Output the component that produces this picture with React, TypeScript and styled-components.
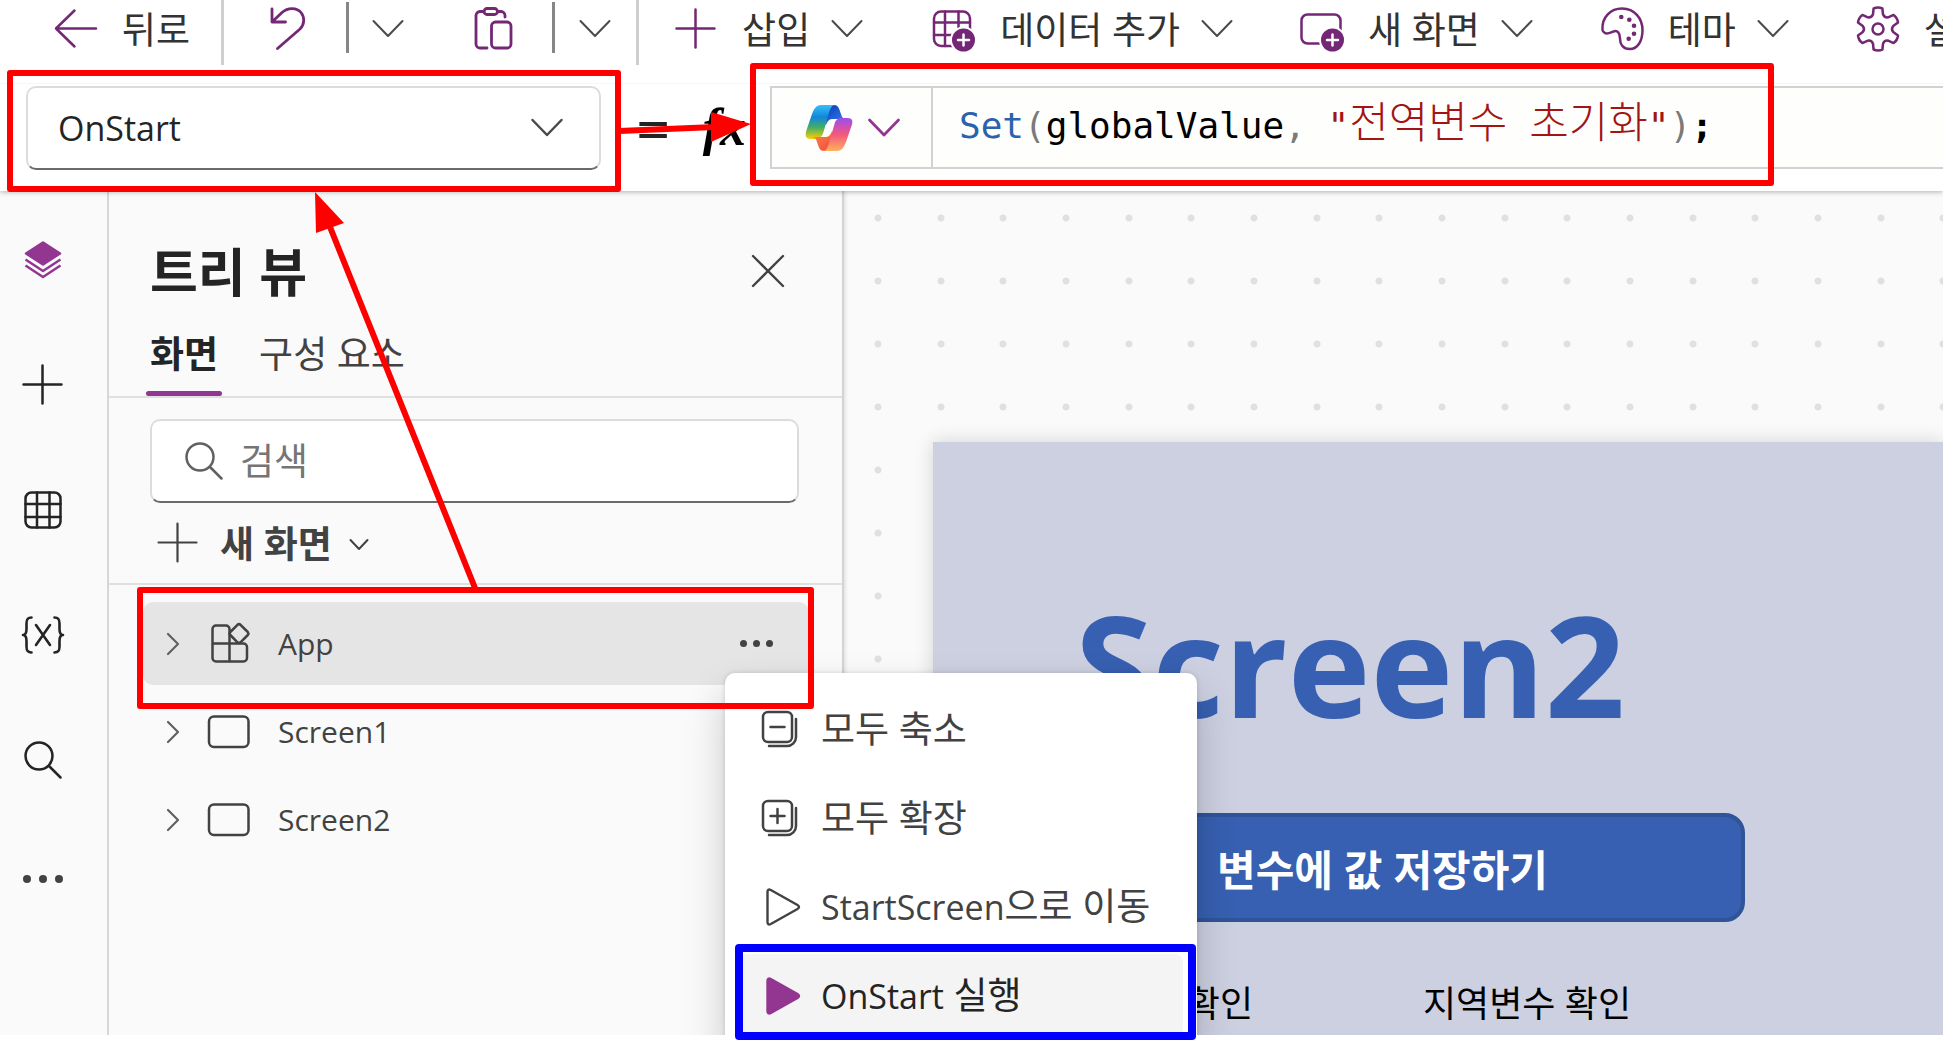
import React from "react";
import styled, { createGlobalStyle, css } from "styled-components";

const PURPLE = "#742774";
const ACCENT = "#923692";
const INK = "#242424";
const INK_SOFT = "#424242";
const LINE = "#dcdcdc";

const GlobalStyle = createGlobalStyle`
  *, *::before, *::after { box-sizing: border-box; }
  body {
    margin: 0;
    background: #fff;
    color: ${INK};
    font-family: "Open Sans", "Noto Sans CJK KR", sans-serif;
    overflow: hidden;
  }
  button, input, select {
    font: inherit;
    color: inherit;
    background: none;
    border: 0;
    padding: 0;
    margin: 0;
    outline: none;
  }
  svg { display: block; flex: none; }
`;

const Page = styled.div`
  position: relative;
  display: flex;
  flex-direction: column;
  height: 100vh;
  padding-bottom: 14px;
  overflow: hidden;
`;

/* ---------- header ---------- */

const Header = styled.header`
  position: relative;
  z-index: 2;
  flex: none;
  background: #fff;
  box-shadow: 0 1px 5px rgba(0, 0, 0, 0.3);
`;

const Toolbar = styled.div`
  display: flex;
  align-items: flex-start;
  height: 83px;
  overflow: hidden;
`;

const ToolButton = styled.button<{ $ml?: number }>`
  display: flex;
  flex: none;
  align-items: center;
  gap: 24px;
  height: 58px;
  margin-left: ${(p) => p.$ml ?? 0}px;
  font-size: 37px;
  line-height: 58px;
  white-space: nowrap;
  color: #333;
  > span { padding-top: 2px; }
  > span + svg { margin-left: -3px; }
`;

const ToolDivider = styled.span<{ $ml: number; $short?: boolean }>`
  flex: none;
  width: 3px;
  height: ${(p) => (p.$short ? 51 : 65)}px;
  margin-top: ${(p) => (p.$short ? 2 : 0)}px;
  margin-left: ${(p) => p.$ml}px;
  background: ${(p) => (p.$short ? "#868686" : "#cfcfcf")};
`;

const PropertyBar = styled.div`
  display: flex;
  align-items: flex-start;
  height: 108px;
  padding: 2px 0 0 26px;
  border-top: 1px solid #f7f7f7;
`;

const SelectBox = styled.div`
  display: grid;
  flex: none;
  width: 575px;
  align-items: center;
  > * { grid-area: 1 / 1; }
  > svg { justify-self: end; margin-right: 38px; pointer-events: none; }
`;

const PropertySelect = styled.select`
  appearance: none;
  width: 100%;
  height: 84px;
  padding-left: 30px;
  border: 2px solid ${LINE};
  border-bottom-color: #6a6a6a;
  border-radius: 10px;
  font-size: 34px;
`;

const FormulaSigns = styled.div`
  display: flex;
  flex: none;
  align-items: center;
  justify-content: space-between;
  width: 169px;
  height: 84px;
  padding: 0 24px 0 35px;
  font-size: 60px;
  line-height: 84px;
  > em { font-family: "Liberation Serif", serif; font-size: 52px; font-weight: 700; color: #000; }
`;

const FormulaBox = styled.div`
  display: flex;
  flex: 1;
  height: 83px;
  border: 2px solid #d2d2d2;
  border-right: 0;
  background: #fefefc;
`;

const CopilotButton = styled.button`
  display: flex;
  align-items: center;
  flex: none;
  gap: 15px;
  width: 161px;
  padding-left: 33px;
  border-right: 2px solid #d2d2d2;
`;

const Formula = styled.div`
  flex: 1;
  padding-left: 26px;
  font-family: "DejaVu Sans Mono", "Noto Sans CJK KR", monospace;
  font-size: 36px;
  line-height: 70px;
  white-space: pre;
  color: #000;
  outline: none;
`;

const Token = styled.span<{ $kind: "fn" | "punct" | "str" | "hangul" }>`
  ${(p) => p.$kind === "fn" && css`color: #2b62ad;`}
  ${(p) => p.$kind === "punct" && css`color: #7a7a7a;`}
  ${(p) => p.$kind === "str" && css`color: #a31515;`}
  ${(p) => p.$kind === "hangul" && css`color: #a31515; font-size: 43px; font-weight: 300;`}
`;

/* ---------- body ---------- */

const Workspace = styled.main`
  position: relative;
  display: flex;
  flex: 1;
  min-height: 0;
  overflow: hidden;
  background: #fafafa;
`;

const Rail = styled.nav`
  display: flex;
  flex-direction: column;
  flex: none;
  width: 109px;
  padding-top: 6px;
  padding-right: 21px;
  border-right: 2px solid ${LINE};
`;

const RailButton = styled.button`
  display: flex;
  flex: none;
  align-items: center;
  justify-content: center;
  height: 125px;
  color: ${INK};
  &:last-child { height: 113px; }
`;

const TreePanel = styled.aside`
  flex: none;
  position: relative;
  z-index: 1;
  width: 735px;
  border-right: 2px solid #d4d4d4;
  background: #fafafa;
  box-shadow: 1px 0 4px rgba(0, 0, 0, 0.12);
`;

const PanelHeader = styled.div`
  display: flex;
  align-items: center;
  justify-content: space-between;
  height: 116px;
  padding: 46px 57px 0 41px;
`;

const PanelTitle = styled.h2`
  margin: 0;
  font-size: 52px;
  line-height: 70px;
  font-weight: 700;
`;

const Tabs = styled.div`
  display: flex;
  gap: 33px;
  height: 91px;
  padding-left: 37px;
  border-bottom: 2px solid #e0e0e0;
`;

const Tab = styled.button<{ $active?: boolean }>`
  position: relative;
  height: 89px;
  padding: 4px 4px 0;
  font-size: 37px;
  line-height: 85px;
  font-weight: ${(p) => (p.$active ? 700 : 400)};
  color: ${(p) => (p.$active ? INK : INK_SOFT)};
  ${(p) =>
    p.$active &&
    css`
      &::after {
        content: "";
        position: absolute;
        left: 0;
        right: 0;
        bottom: 0;
        height: 5px;
        border-radius: 3px;
        background: ${ACCENT};
      }
    `}
`;

const SearchBox = styled.label`
  display: flex;
  align-items: center;
  gap: 17px;
  height: 84px;
  margin: 21px 43px 0 41px;
  padding-left: 33px;
  border: 2px solid ${LINE};
  border-bottom-color: #6a6a6a;
  border-radius: 10px;
  background: #fff;
  color: #616161;
`;

const SearchInput = styled.input`
  flex: 1;
  min-width: 0;
  font-size: 37px;
  line-height: 60px;
  &::placeholder { color: #757575; opacity: 1; }
`;

const NewScreenRow = styled.div`
  display: flex;
  height: 82px;
  padding-left: 47px;
  border-bottom: 2px solid #e0e0e0;
`;

const NewScreenButton = styled.button`
  display: flex;
  align-items: center;
  height: 80px;
  gap: 20px;
  font-size: 37px;
  line-height: 78px;
  font-weight: 700;
  color: ${INK_SOFT};
  > span { padding-top: 2px; }
  > span + svg { margin-left: -3px; }
`;

const TreeList = styled.ul`
  display: flex;
  flex-direction: column;
  gap: 5px;
  margin: 0;
  padding: 17px 33px 0 34px;
  list-style: none;
`;

const TreeRow = styled.li<{ $selected?: boolean }>`
  display: flex;
  align-items: center;
  height: 83px;
  padding: 0 36px 0 23px;
  border-radius: 10px;
  background: ${(p) => (p.$selected ? "#e5e5e5" : "transparent")};
  color: ${INK_SOFT};
`;

const TreeItem = styled.button`
  display: flex;
  flex: 1;
  align-items: center;
  gap: 28px;
  font-size: 30px;
  line-height: 60px;
  text-align: left;
`;

const IconButton = styled.button`
  flex: none;
  color: ${INK_SOFT};
`;

/* ---------- canvas ---------- */

const Canvas = styled.section`
  display: flex;
  flex: 1;
  min-width: 0;
  padding: 251px 0 0 89px;
  background-color: #fafafa;
  background-image:
    radial-gradient(circle at 34px 27px, #e0e0e0 3px, transparent 4px),
    radial-gradient(circle at 97px 27px, #e0e0e0 3px, transparent 4px),
    radial-gradient(circle at 159px 27px, #e0e0e0 3px, transparent 4px);
  background-size: 188px 63px;
`;

const Stage = styled.div`
  flex: 1;
  padding: 152px 0 0 87px;
  background: #cdd0e1;
  box-shadow: 0 0 18px rgba(0, 0, 0, 0.16);
`;

const StageTitle = styled.h1`
  margin: 0 0 79px 55px;
  font-size: 140px;
  line-height: 140px;
  font-weight: 700;
  color: #3760b2;
`;

const StageButton = styled.button`
  display: block;
  width: 725px;
  height: 109px;
  padding-top: 4px;
  border: 4px solid #2f5498;
  border-radius: 20px;
  background: #3760b2;
  color: #fff;
  font-size: 42px;
  line-height: 97px;
  font-weight: 700;
`;

const StageLabels = styled.div`
  display: grid;
  grid-template-columns: 378px 378px;
  margin-top: 58px;
  padding-left: 25px;
  font-size: 36px;
  line-height: 48px;
  color: #000;
`;

/* ---------- context menu ---------- */

const Menu = styled.div`
  position: absolute;
  z-index: 3;
  left: 725px;
  top: 482px;
  display: flex;
  flex-direction: column;
  gap: 6px;
  width: 472px;
  padding: 14px;
  border-radius: 10px;
  background: #fff;
  box-shadow: 0 0 5px rgba(0, 0, 0, 0.14), 0 20px 40px rgba(0, 0, 0, 0.2);
`;

const MenuItem = styled.button<{ $hover?: boolean }>`
  display: flex;
  align-items: center;
  gap: 20px;
  height: 83px;
  padding-left: 22px;
  border-radius: 8px;
  background: ${(p) => (p.$hover ? "#f4f4f4" : "transparent")};
  color: ${(p) => (p.$hover ? INK : INK_SOFT)};
  font-size: 37px;
  line-height: 82px;
  white-space: nowrap;
`;

const Latin = styled.span`
  font-size: 34px;
`;

const Annotations = styled.svg`
  position: absolute;
  z-index: 4;
  left: 0;
  top: 0;
  pointer-events: none;
`;

/* ---------- icons ---------- */

type IconProps = { children: React.ReactNode; w?: number; h?: number; color?: string; sw?: number };

const Icon = ({ children, w = 44, h = 44, color = "currentColor", sw = 2.5 }: IconProps) => (
  <svg
    width={w}
    height={h}
    viewBox={`0 0 ${w} ${h}`}
    fill="none"
    stroke={color}
    strokeWidth={sw}
    strokeLinecap="round"
    strokeLinejoin="round"
    overflow="visible"
    aria-hidden="true"
  >
    {children}
  </svg>
);

const ChevronDown = ({ color = "#4a4a4a", sw = 2 }: { color?: string; sw?: number }) => (
  <Icon w={32} h={20} color={color} sw={sw}>
    <path d="M1.5 2 L16 17 L30.5 2" />
  </Icon>
);

const ChevronRight = () => (
  <Icon w={14} h={24} color="#616161" sw={2.2}>
    <path d="M2 2 L12 12 L2 22" />
  </Icon>
);

const BackIcon = () => (
  <Icon color={PURPLE}>
    <path d="M42 21.5 H2 M20.5 3.5 L2 21.5 L20.5 39.5" />
  </Icon>
);

const UndoIcon = () => (
  <Icon color={PURPLE} sw={2.8}>
    <path d="M6 2 V15 H19.500 M6.500 14.500 L16 5.500 C22 0 31 0.500 35 5.500 C39 10.500 38.500 17.500 34 22 L11.500 41.500" />
  </Icon>
);

const PasteIcon = () => (
  <Icon color={PURPLE} sw={2.8}>
    <path d="M13 4.500 H9 A4 4 0 0 0 5 8.500 V37 A4 4 0 0 0 9 41 H16 M26.500 4.500 H30 A4 4 0 0 1 34 8.500 V10" />
    <rect x="13" y="1.500" width="13.500" height="6" rx="3" />
    <rect x="20.500" y="15" width="19.500" height="26" rx="4" />
  </Icon>
);

const PlusIcon = ({ color = "currentColor", sw = 2.5 }: { color?: string; sw?: number }) => (
  <Icon color={color} sw={sw}>
    <path d="M21.500 2.500 V40.500 M2.500 21.500 H40.500" />
  </Icon>
);

const PlusBadge = ({ cx }: { cx: number }) => (
  <>
    <circle cx={cx} cy="33" r="13.500" fill="#fff" stroke="none" />
    <circle cx={cx} cy="33" r="11.500" fill={PURPLE} stroke="none" />
    <path d={`M${cx - 5.5} 33 h11 M${cx} 27.500 v11`} stroke="#fff" />
  </>
);

const DataIcon = () => (
  <Icon w={46} color={PURPLE}>
    <rect x="4" y="4.500" width="36" height="34.500" rx="7" />
    <path d="M15 4.500 V39 M28.500 4.500 V39 M4 15.500 H40 M4 28 H40" />
    <PlusBadge cx={33.5} />
  </Icon>
);

const NewScreenIcon = () => (
  <Icon color={PURPLE}>
    <rect x="1.500" y="7.500" width="39" height="29" rx="6" />
    <PlusBadge cx={32.5} />
  </Icon>
);

const ThemeIcon = () => (
  <Icon color={PURPLE}>
    <path d="M2.500 23 C1.500 10 11 1.500 22 1.500 C35 1.500 42.500 12 42.500 23 C42.500 35 37 42 30 42 C22.500 42 20 36.500 20 31.500 C20 26 17.500 23 13.500 24.500 C9.500 26 7.500 27.500 5 26 C3.300 25.200 2.600 24.500 2.500 23 Z" />
    <g fill={PURPLE} stroke="none">
      <circle cx="21.300" cy="10" r="2.300" />
      <circle cx="29.300" cy="12.700" r="2.300" />
      <circle cx="34" cy="18.700" r="2.300" />
      <circle cx="34" cy="26.700" r="2.300" />
      <circle cx="28.700" cy="31.700" r="2.300" />
    </g>
  </Icon>
);

const gearPath = (() => {
  const at = (deg: number, r: number) => {
    const a = (deg * Math.PI) / 180;
    return `${(22 + r * Math.cos(a)).toFixed(1)} ${(22 + r * Math.sin(a)).toFixed(1)}`;
  };
  const parts: string[] = [];
  for (let k = 0; k < 6; k++) {
    const c = -90 + k * 60;
    parts.push(`${k ? "L" : "M"}${at(c - 19, 15.5)} L${at(c - 12, 21)} Q${at(c, 22.5)} ${at(c + 12, 21)} L${at(c + 19, 15.5)} Q${at(c + 30, 12.8)} ${at(c + 41, 15.5)}`);
  }
  return parts.join(" ") + " Z";
})();

const GearIcon = () => (
  <Icon color={PURPLE}>
    <path d={gearPath} />
    <circle cx="22" cy="22" r="5.500" />
  </Icon>
);

const CopilotIcon = () => (
  <svg width="48" height="46" viewBox="0 0 48 46" aria-hidden="true">
    <defs>
      <linearGradient id="cpA" x1="0" y1="0" x2="0" y2="1">
        <stop offset="0" stopColor="#35c1f7" />
        <stop offset="0.35" stopColor="#1186dd" />
        <stop offset="0.65" stopColor="#41ad67" />
        <stop offset="1" stopColor="#ffce05" />
      </linearGradient>
      <linearGradient id="cpB" x1="0" y1="0" x2="1" y2="1">
        <stop offset="0" stopColor="#0c2fb0" />
        <stop offset="1" stopColor="#2f8cf5" />
      </linearGradient>
      <linearGradient id="cpC" x1="0" y1="0" x2="0" y2="1">
        <stop offset="0" stopColor="#ffb15c" />
        <stop offset="0.5" stopColor="#f2587c" />
        <stop offset="1" stopColor="#a04bf0" />
      </linearGradient>
      <linearGradient id="cpD" x1="0" y1="0" x2="1" y2="1">
        <stop offset="0" stopColor="#f0443c" />
        <stop offset="1" stopColor="#fd8a4a" />
      </linearGradient>
    </defs>
    <path d="M22 0 H29 C33 0 34 3 36 9 C37 12.500 38 13.500 41 14 H27 C24 14 22 17 21 20 L17 14 Z" fill="url(#cpB)" />
    <path d="M30 0 H16 C11 0 9 4 7 9 L1.500 25 C-0.500 31 1 34 6 34 H10 C15 34 17 32 18.500 27 L24 8 C25.500 3 27 0 30 0 Z" fill="url(#cpA)" />
    <g transform="rotate(180 24 23)">
      <path d="M22 0 H29 C33 0 34 3 36 9 C37 12.500 38 13.500 41 14 H27 C24 14 22 17 21 20 L17 14 Z" fill="url(#cpD)" />
      <path d="M30 0 H16 C11 0 9 4 7 9 L1.500 25 C-0.500 31 1 33 6 33 H10 C15 33 17 32 18.500 27 L24 8 C25.500 3 27 0 30 0 Z" fill="url(#cpC)" />
    </g>
  </svg>
);

const LayersIcon = () => (
  <Icon w={38} h={38} color={ACCENT}>
    <path d="M19 1.500 L36 12.500 L19 23.500 L2 12.500 Z" fill={ACCENT} />
    <path d="M1.500 18.500 L19 30 L36.500 18.500 M1.500 24.500 L19 36 L36.500 24.500" strokeLinecap="butt" />
  </Icon>
);

const GridIcon = () => (
  <Icon w={38} h={38}>
    <rect x="1.500" y="1.500" width="35" height="35" rx="6" />
    <path d="M13 1.500 V36.500 M25.500 1.500 V36.500 M1.500 13 H36.500 M1.500 26 H36.500" />
  </Icon>
);

const VariableIcon = () => (
  <Icon w={44} h={38} sw={2.6}>
    <path d="M10.500 1.500 C6 1.500 5.500 4 5.500 7.500 V13 C5.500 16.500 4.500 19 2 19 C4.500 19 5.500 21.500 5.500 25 V30.500 C5.500 34 6 36.500 10.500 36.500" />
    <path d="M33.500 1.500 C38 1.500 38.500 4 38.500 7.500 V13 C38.500 16.500 39.500 19 42 19 C39.500 19 38.500 21.500 38.500 25 V30.500 C38.500 34 38 36.500 33.500 36.500" />
    <path d="M15 9 L29 29 M29 9 L15 29" />
  </Icon>
);

const SearchIcon = () => (
  <Icon w={38} h={38}>
    <circle cx="15" cy="15" r="13.500" />
    <path d="M25 25 L36.500 36.500" />
  </Icon>
);

const DotsIcon = ({ r, step }: { r: number; step: number }) => {
  const w = step * 2 + r * 2;
  return (
    <svg width={w} height={r * 2} viewBox={`0 0 ${w} ${r * 2}`} fill={INK_SOFT} aria-hidden="true">
      {[0, 1, 2].map((i) => (
        <circle key={i} cx={r + i * step} cy={r} r={r} />
      ))}
    </svg>
  );
};

const CloseIcon = () => (
  <Icon w={34} h={34} sw={2.4} color={INK_SOFT}>
    <path d="M2 1 L32 31 M32 1 L2 31" />
  </Icon>
);

const SmallChevron = () => (
  <Icon w={20} h={12} sw={2}>
    <path d="M1.500 3 L10 12 L18.500 3" />
  </Icon>
);

const AppIcon = () => (
  <Icon w={42} h={42}>
    <path d="M21.500 38.500 H8 A3.500 3.500 0 0 1 4.500 35 V6 A3.500 3.500 0 0 1 8 2.500 H18 A3.500 3.500 0 0 1 21.500 6 V38.500 H35.500 A3.500 3.500 0 0 0 39 35 V24 A3.500 3.500 0 0 0 35.500 20.500 H4.500" />
    <path d="M29.500 1.800 Q31 0.500 32.500 1.800 L39.800 9 Q41 10.500 39.800 12 L32.500 19.300 Q31 20.500 29.500 19.300 L22.300 12 Q21 10.500 22.300 9 Z" />
  </Icon>
);

const ScreenIcon = () => (
  <Icon w={42} h={42}>
    <rect x="1" y="5.500" width="39.500" height="30.500" rx="5" />
  </Icon>
);

const StackIcon = ({ plus }: { plus?: boolean }) => (
  <Icon w={40} h={40}>
    <rect x="2" y="3" width="29" height="30" rx="5" />
    <path d="M8 37 H26 A9 9 0 0 0 35 28 V10" />
    <path d={plus ? "M9.500 18 H23.500 M16.500 11 V25" : "M9.500 18 H23.500"} />
  </Icon>
);

const PlayIcon = ({ solid }: { solid?: boolean }) => (
  <Icon w={40} h={40} color={solid ? ACCENT : INK_SOFT} sw={2.4}>
    <path
      d="M6.500 5 Q6.500 1.500 9.800 3 L36.500 18 Q39.500 20 36.500 22 L9.800 37 Q6.500 38.500 6.500 35 Z"
      fill={solid ? ACCENT : "none"}
    />
  </Icon>
);

/* ---------- page ---------- */

const screens = ["Screen1", "Screen2"];

export default function App() {
  return (
    <Page>
      <GlobalStyle />
      <Header>
        <Toolbar>
          <ToolButton $ml={54}>
            <BackIcon />
            <span>뒤로</span>
          </ToolButton>
          <ToolDivider $ml={31} />
          <ToolButton $ml={42} aria-label="실행 취소"><UndoIcon /></ToolButton>
          <ToolDivider $ml={36} $short />
          <ToolButton $ml={23} aria-label="실행 취소 옵션"><ChevronDown /></ToolButton>
          <ToolButton $ml={67} aria-label="붙여넣기"><PasteIcon /></ToolButton>
          <ToolDivider $ml={37} $short />
          <ToolButton $ml={24} aria-label="붙여넣기 옵션"><ChevronDown /></ToolButton>
          <ToolDivider $ml={25} />
          <ToolButton $ml={35}>
            <PlusIcon color={PURPLE} />
            <span>삽입</span>
            <ChevronDown />
          </ToolButton>
          <ToolButton $ml={67}>
            <DataIcon />
            <span>데이터 추가</span>
            <ChevronDown />
          </ToolButton>
          <ToolButton $ml={67}>
            <NewScreenIcon />
            <span>새 화면</span>
            <ChevronDown />
          </ToolButton>
          <ToolButton $ml={67}>
            <ThemeIcon />
            <span>테마</span>
            <ChevronDown />
          </ToolButton>
          <ToolButton $ml={67}>
            <GearIcon />
            <span>설정</span>
          </ToolButton>
        </Toolbar>
        <PropertyBar>
          <SelectBox>
            <PropertySelect aria-label="속성" defaultValue="OnStart">
              <option>OnStart</option>
            </PropertySelect>
            <ChevronDown sw={2.5} />
          </SelectBox>
          <FormulaSigns>
            <span>=</span>
            <em>fx</em>
          </FormulaSigns>
          <FormulaBox>
            <CopilotButton aria-label="Copilot">
              <CopilotIcon />
              <ChevronDown color={ACCENT} sw={2.8} />
            </CopilotButton>
            <Formula role="textbox" aria-label="수식" tabIndex={0}>
              <Token $kind="fn">Set</Token>
              <Token $kind="punct">(</Token>
              globalValue
              <Token $kind="punct">, </Token>
              <Token $kind="str">"</Token>
              <Token $kind="hangul">전역변수</Token>
              <Token $kind="str"> </Token>
              <Token $kind="hangul">초기화</Token>
              <Token $kind="str">"</Token>
              <Token $kind="punct">)</Token>
              <b>;</b>
            </Formula>
          </FormulaBox>
        </PropertyBar>
      </Header>

      <Workspace>
        <Rail>
          <RailButton aria-label="트리 뷰"><LayersIcon /></RailButton>
          <RailButton aria-label="삽입"><PlusIcon /></RailButton>
          <RailButton aria-label="데이터"><GridIcon /></RailButton>
          <RailButton aria-label="변수"><VariableIcon /></RailButton>
          <RailButton aria-label="검색"><SearchIcon /></RailButton>
          <RailButton aria-label="더 보기"><DotsIcon r={4} step={16} /></RailButton>
        </Rail>

        <TreePanel>
          <PanelHeader>
            <PanelTitle>트리 뷰</PanelTitle>
            <IconButton aria-label="닫기"><CloseIcon /></IconButton>
          </PanelHeader>
          <Tabs>
            <Tab $active>화면</Tab>
            <Tab>구성 요소</Tab>
          </Tabs>
          <SearchBox>
            <SearchIcon />
            <SearchInput type="text" placeholder="검색" aria-label="검색" />
          </SearchBox>
          <NewScreenRow>
            <NewScreenButton>
              <PlusIcon sw={2.2} />
              <span>새 화면</span>
              <SmallChevron />
            </NewScreenButton>
          </NewScreenRow>
          <TreeList>
            <TreeRow $selected>
              <TreeItem>
                <ChevronRight />
                <AppIcon />
                App
              </TreeItem>
              <IconButton aria-label="추가 작업"><DotsIcon r={3.5} step={13} /></IconButton>
            </TreeRow>
            {screens.map((name) => (
              <TreeRow key={name}>
                <TreeItem>
                  <ChevronRight />
                  <ScreenIcon />
                  {name}
                </TreeItem>
              </TreeRow>
            ))}
          </TreeList>
        </TreePanel>

        <Canvas>
          <Stage>
            <StageTitle>Screen2</StageTitle>
            <StageButton>변수에 값 저장하기</StageButton>
            <StageLabels>
              <span>전역변수 확인</span>
              <span>지역변수 확인</span>
            </StageLabels>
          </Stage>
        </Canvas>

        <Menu>
          <MenuItem>
            <StackIcon />
            <span>모두 축소</span>
          </MenuItem>
          <MenuItem>
            <StackIcon plus />
            <span>모두 확장</span>
          </MenuItem>
          <MenuItem>
            <PlayIcon />
            <span><Latin>StartScreen</Latin>으로 이동</span>
          </MenuItem>
          <MenuItem $hover>
            <PlayIcon solid />
            <span><Latin>OnStart</Latin> 실행</span>
          </MenuItem>
        </Menu>
      </Workspace>

      <Annotations width="1800" height="1049" fill="none" stroke="#f00" strokeWidth="6" strokeLinejoin="round" aria-hidden="true">
        <rect x="10" y="73" width="608" height="116" />
        <rect x="753" y="66" width="1018" height="117" />
        <rect x="140" y="590" width="671" height="116" />
        <path d="M619 131 L715 127 M475 588 L328 222" />
        <path d="M751 124 L711 112 V142 Z M315 192 L316 233 L344 223 Z" fill="#f00" stroke="none" />
        <rect x="739" y="948" width="453" height="88" stroke="#00f" strokeWidth="8" />
      </Annotations>
    </Page>
  );
}
